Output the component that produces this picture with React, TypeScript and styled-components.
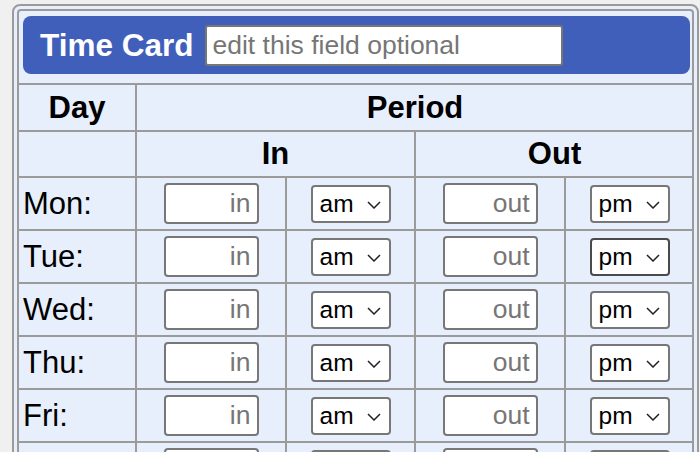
import styled, { createGlobalStyle } from 'styled-components';

const GlobalStyle = createGlobalStyle`
  html, body {
    margin: 0;
    padding: 0;
    overflow: hidden;
    background: #f0f0f0;
  }
  body {
    font-family: 'Liberation Sans', Arial, sans-serif;
  }
`;

const days = ['Mon', 'Tue', 'Wed', 'Thu', 'Fri', 'Sat', 'Sun'];

const Page = styled.div`
  padding: 4px 1px 0 12px;
`;

const Card = styled.div`
  border: 2px solid #9b9b9b;
  border-radius: 8px;
  background: #e8effc;
  padding: 3px;
`;

const Frame = styled.div`
  border: 2px solid #9b9b9b;
  border-radius: 4px;
  overflow: hidden;
`;

const Table = styled.table`
  width: 100%;
  border-collapse: collapse;
  border-style: hidden;
  table-layout: fixed;
`;

const Cell = styled.td`
  border: 2px solid #9b9b9b;
  padding: 0;
  vertical-align: middle;
`;

const TitleCell = styled(Cell)`
  height: 72px;
  padding: 5px 3px 9px 4px;
  box-sizing: border-box;
`;

const TitleBar = styled.div`
  display: flex;
  align-items: center;
  gap: 12px;
  height: 58px;
  padding-left: 17px;
  background: #405fbb;
  border-radius: 8px;
`;

const Title = styled.h1`
  margin: 0;
  color: #fff;
  font-size: 31.5px;
  font-weight: 700;
`;

const TitleInput = styled.input`
  width: 358px;
  height: 41px;
  box-sizing: border-box;
  border: 2px solid #777;
  border-radius: 3px;
  padding: 0 5px;
  font-family: inherit;
  font-size: 26.5px;
  color: #222;
  background: #fff;
  &::placeholder {
    color: #767676;
  }
`;

const HeadCell = styled(Cell).attrs({ as: 'th' })<{ $h: number }>`
  height: ${(p) => p.$h}px;
  font-size: 31px;
  font-weight: 700;
  text-align: center;
  color: #000;
`;

const DayCell = styled(Cell)`
  height: 51px;
  padding-left: 4px;
  font-size: 31px;
  color: #000;
`;

const FieldCell = styled(Cell)`
  text-align: center;
`;

const TimeInput = styled.input`
  width: 95px;
  height: 41px;
  box-sizing: border-box;
  border: 2px solid #777;
  border-radius: 4px;
  padding: 0 6px;
  text-align: right;
  font-family: inherit;
  font-size: 26.5px;
  background: #fff;
  vertical-align: middle;
  &::placeholder {
    color: #767676;
  }
`;

const SelectWrap = styled.span`
  position: relative;
  display: inline-block;
  vertical-align: middle;
`;

const Select = styled.select<{ $active?: boolean }>`
  appearance: none;
  width: 80px;
  height: 38px;
  box-sizing: border-box;
  border: 2px solid ${(p) => (p.$active ? '#4a4a4a' : '#777')};
  border-radius: 4px;
  padding: 0 0 0 7px;
  font-family: inherit;
  font-size: 24.5px;
  color: #000;
  background: #fff;
  display: block;
`;

const Chevron = styled.svg`
  position: absolute;
  right: 10px;
  top: 16px;
  pointer-events: none;
`;

function Period({ value, active }: { value: string; active?: boolean }) {
  return (
    <SelectWrap>
      <Select defaultValue={value} $active={active}>
        <option value="am">am</option>
        <option value="pm">pm</option>
      </Select>
      <Chevron width="14" height="8" viewBox="0 0 14 8">
        <polyline points="1,1 7,7 13,1" fill="none" stroke="#222" strokeWidth="1.5" />
      </Chevron>
    </SelectWrap>
  );
}

export default function App() {
  return (
    <>
      <GlobalStyle />
      <Page>
        <Card>
          <Frame>
            <Table>
              <colgroup>
                <col style={{ width: 117 }} />
                <col style={{ width: 150 }} />
                <col style={{ width: 129 }} />
                <col style={{ width: 150 }} />
                <col style={{ width: 128 }} />
              </colgroup>
              <tbody>
                <tr>
                  <TitleCell colSpan={5}>
                    <TitleBar>
                      <Title>Time Card</Title>
                      <TitleInput placeholder="edit this field optional" />
                    </TitleBar>
                  </TitleCell>
                </tr>
                <tr>
                  <HeadCell $h={45}>Day</HeadCell>
                  <HeadCell $h={45} colSpan={4}>Period</HeadCell>
                </tr>
                <tr>
                  <HeadCell $h={44}></HeadCell>
                  <HeadCell $h={44} colSpan={2}>In</HeadCell>
                  <HeadCell $h={44} colSpan={2}>Out</HeadCell>
                </tr>
                {days.map((d) => (
                  <tr key={d}>
                    <DayCell>{d}:</DayCell>
                    <FieldCell>
                      <TimeInput placeholder="in" />
                    </FieldCell>
                    <FieldCell>
                      <Period value="am" />
                    </FieldCell>
                    <FieldCell>
                      <TimeInput placeholder="out" />
                    </FieldCell>
                    <FieldCell>
                      <Period value="pm" active={d === 'Tue'} />
                    </FieldCell>
                  </tr>
                ))}
              </tbody>
            </Table>
          </Frame>
        </Card>
      </Page>
    </>
  );
}
